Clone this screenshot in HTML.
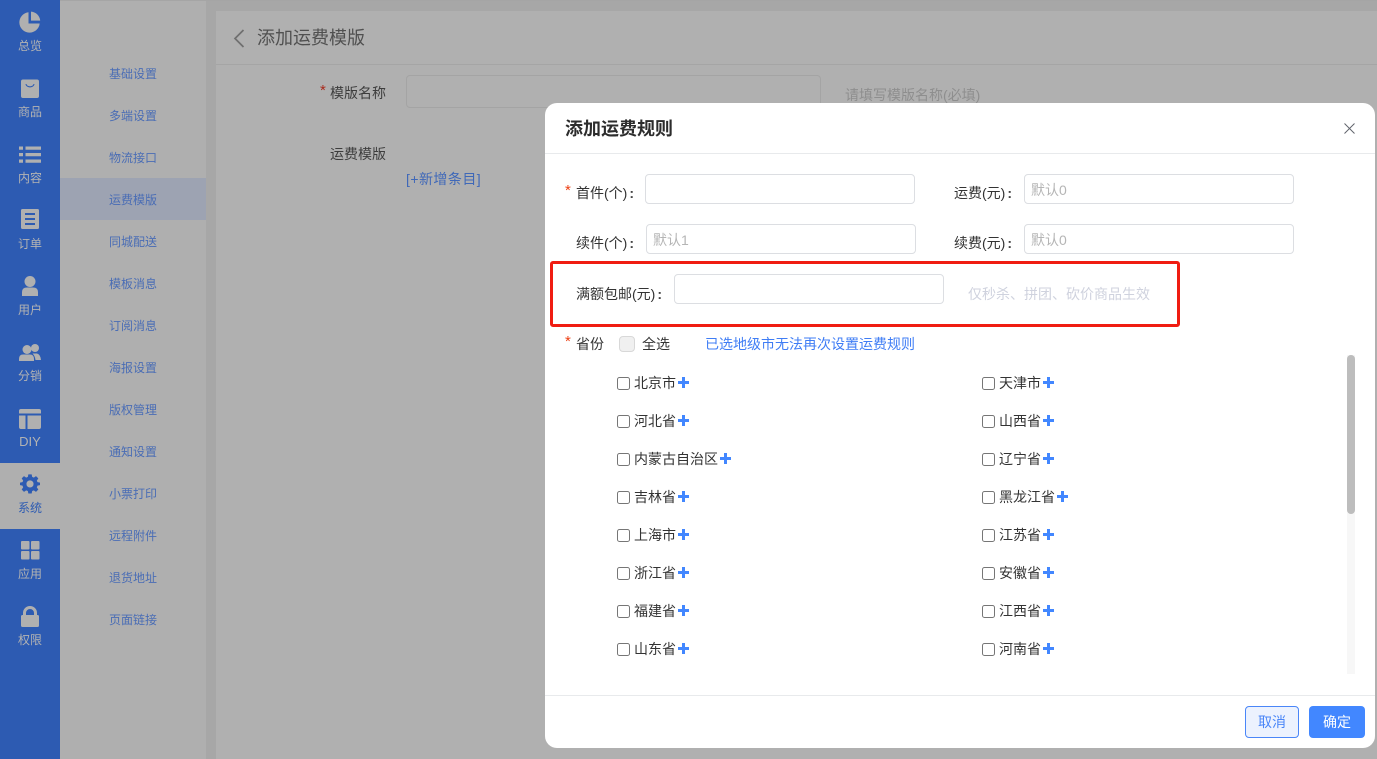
<!DOCTYPE html>
<html lang="zh"><head><meta charset="utf-8"><title>添加运费规则</title>
<style>
*{box-sizing:border-box;margin:0;padding:0}
html,body{width:1377px;height:759px;overflow:hidden;background:#a7a7a7;font-family:"Liberation Sans","Noto Sans CJK SC",sans-serif}
.a{position:absolute;white-space:nowrap}
#side{position:absolute;left:0;top:0;width:60px;height:759px;background:#2d5bb2}
.n{position:absolute;left:0;width:60px;height:66px;color:#b3b3b3;font-size:12px;text-align:center}
.n svg{position:absolute;left:18px;top:10px;width:24px;height:24px;fill:#b0b0b0}
.n span{position:absolute;left:0;right:0;top:36px;line-height:18px}
.n.on{background:#afafaf;color:#2d5bb2}.n.on svg{fill:#2d5bb2}
#sub{position:absolute;left:60px;top:1px;width:146px;height:758px;background:#afafaf}
#sub div{position:absolute;left:0;width:146px;height:42px;line-height:42px;padding-left:49px;font-size:12px;color:#4a6db5}
#sub .on{background:#9da3b2}
#main{position:absolute;left:216px;top:11px;width:1161px;height:748px;background:#b0b0b0}
#dlg{position:absolute;left:545px;top:103px;width:830px;height:645px;background:#fff;border-radius:12px;overflow:hidden}
.t{font-size:14px;color:#333;line-height:20px}
.t u{text-decoration:none;font-weight:700;margin-left:2px;color:#444}
.i{position:absolute;width:270px;height:30px;border:1px solid #dcdee2;border-radius:4px;background:#fff;font-size:14px;color:#b5b5b5;line-height:30px;padding-left:6px}
.s{color:#ed4014;font-size:15px;font-family:"Liberation Sans",sans-serif}
.c{position:absolute;width:13px;height:13px;border:1px solid #767676;border-radius:2.5px;background:#fff}
.p{position:absolute;font-size:14px;line-height:20px;color:#333;white-space:nowrap}
.p b{display:inline-block;position:relative;width:11px;height:12px;margin-left:2px;vertical-align:0}
.p b:before{content:"";position:absolute;left:0;top:5px;width:11px;height:3px;background:#4287ff}
.p b:after{content:"";position:absolute;left:4px;top:1px;width:3px;height:11px;background:#4287ff}
</style></head><body>
<div class="a" style="left:0;top:0;width:1377px;height:1px;background:#a5a5a5"></div>
<div id="side">
<div class="n" style="top:1px"><svg viewBox="0 0 24 24" style="top:9px"><path d="M10.500 2.300A10.200 10.200 0 1 0 21.700 13.500H10.500Z"/><path d="M13 1.600V10.600H22.200A9.900 9.900 0 0 0 13 1.600Z"/></svg><span>总览</span></div>
<div class="n" style="top:67px"><svg viewBox="0 0 24 24"><path fill-rule="evenodd" d="M5 2.500H19Q21 2.500 21 4.500V19Q21 21 19 21H5Q3 21 3 19V4.500Q3 2.500 5 2.500ZM7.500 7C8 11.500 16 11.500 16.500 7L15.500 7C15 10 9 10 8.500 7Z"/></svg><span>商品</span></div>
<div class="n" style="top:133px"><svg viewBox="0 0 24 24"><path d="M1 3.500h4v3.200H1zM7.500 3.500h15.500v3.200H7.500zM1 10h4v3.200H1zM7.500 10h15.500v3.200H7.500zM1 16.500h4v3.200H1zM7.500 16.500h15.500v3.200H7.500z"/></svg><span>内容</span></div>
<div class="n" style="top:199px"><svg viewBox="0 0 24 24"><path fill-rule="evenodd" d="M4.500 0H19.500Q21 0 21 1.500V18.500Q21 20 19.500 20H4.500Q3 20 3 18.500V1.500Q3 0 4.500 0ZM7 4V6H17V4ZM7 9V11H17V9ZM7 14V16H17V14Z"/></svg><span>订单</span></div>
<div class="n" style="top:265px"><svg viewBox="0 0 24 24"><circle cx="12" cy="6.500" r="5.500"/><path d="M4 21V17Q4 12.500 9 12.500H15Q20 12.500 20 17V21Z"/></svg><span>用户</span></div>
<div class="n" style="top:331px"><svg viewBox="0 0 24 24"><circle cx="9" cy="8.500" r="4.500"/><path d="M1 20V18Q1 13.500 5 13.500H12Q16 13.500 16 18V20Z"/><circle cx="17" cy="7" r="4"/><path d="M14.500 12.500H19Q22.500 13.500 23 19H17.500Q17 15 14.500 12.500Z"/></svg><span>分销</span></div>
<div class="n" style="top:397px"><svg viewBox="0 0 24 24"><path d="M3 2H21Q23 2 23 4V6.500H1V4Q1 2 3 2ZM1 8.500H7.500V22H3Q1 22 1 20ZM9.500 8.500H23V20Q23 22 21 22H9.500Z"/></svg><span style="font-size:13px">DIY</span></div>
<div class="n on" style="top:463px"><svg viewBox="0 0 24 24" style="left:20px;top:10px;width:20px;height:21px"><path fill-rule="evenodd" d="M10 1H14L14.600 4.100 16.600 4.900 19.200 3.100 22 5.900 20.200 8.500 21 10.400 24 11V14L21 14.600 20.200 16.600 22 19.200 19.200 22 16.600 20.200 14.600 21 14 24H10L9.400 21 7.400 20.200 4.800 22 2 19.200 3.800 16.600 3 14.600 0 14V11L3 10.400 3.800 8.500 2 5.900 4.800 3.100 7.400 4.900 9.400 4.100ZM12 8.200A4.300 4.300 0 1 0 12 16.800 4.300 4.300 0 1 0 12 8.200Z"/></svg><span>系统</span></div>
<div class="n" style="top:529px"><svg viewBox="0 0 24 24"><rect x="3" y="2" width="8.500" height="8.500" rx="1"/><rect x="13" y="2" width="8.500" height="8.500" rx="1"/><rect x="3" y="12" width="8.500" height="8.500" rx="1"/><rect x="13" y="12" width="8.500" height="8.500" rx="1"/></svg><span>应用</span></div>
<div class="n" style="top:595px"><svg viewBox="0 0 24 24"><path fill-rule="evenodd" d="M5 10V8A7 7 0 0 1 19 8V10H19.500Q21 10 21 11.500V20.500Q21 22 19.500 22H4.500Q3 22 3 20.500V11.500Q3 10 4.500 10ZM8 10H16V8A4 4 0 0 0 8 8Z"/></svg><span>权限</span></div>
</div>
<div id="sub">
<div style="top:52px">基础设置</div><div style="top:94px">多端设置</div><div style="top:136px">物流接口</div><div class="on" style="top:177px;line-height:44px">运费模版</div><div style="top:219px;line-height:44px">同城配送</div><div style="top:262px">模板消息</div><div style="top:304px">订阅消息</div><div style="top:346px">海报设置</div><div style="top:388px">版权管理</div><div style="top:430px">通知设置</div><div style="top:472px">小票打印</div><div style="top:514px">远程附件</div><div style="top:556px">退货地址</div><div style="top:598px">页面链接</div>
</div>
<div id="main"></div>
<div class="a" style="left:216px;top:64px;width:1161px;height:1px;background:#a5a5a5"></div>
<svg class="a" style="left:232px;top:28px" width="14" height="20" viewBox="0 0 14 20"><path d="M11.500 2L3 10.500 11.500 19" fill="none" stroke="#6f6f6f" stroke-width="1.700"/></svg>
<div class="a" style="left:257px;top:24px;font-size:18px;line-height:28px;color:#505050">添加运费模版</div>
<div class="a" style="left:320px;top:81px;font-size:15px;line-height:20px;color:#a92a1c">*</div>
<div class="a" style="left:330px;top:83px;font-size:14px;line-height:20px;color:#3d3d3d">模版名称</div>
<div class="a" style="left:406px;top:75px;width:415px;height:33px;border:1px solid #a4a4a4;border-radius:4px"></div>
<div class="a" style="left:845px;top:85px;font-size:14px;line-height:20px;color:#8e8e8e">请填写模版名称(必填)</div>
<div class="a" style="left:330px;top:144px;font-size:14px;line-height:20px;color:#3d3d3d">运费模版</div>
<div class="a" style="left:406px;top:169px;font-size:14px;line-height:20px;color:#3f68b8;letter-spacing:.45px">[+新增条目]</div>

<div id="dlg">
<div class="a" style="left:20px;top:13px;font-size:18px;font-weight:700;line-height:26px;color:#2c2c2c">添加运费规则</div>
<svg class="a" style="left:798px;top:19px" width="13" height="13" viewBox="0 0 13 13"><path d="M1.500 1.500L11.500 11.500M11.500 1.500L1.500 11.500" stroke="#60646c" stroke-width="1" fill="none"/></svg>
<div class="a" style="left:0;top:50px;width:830px;height:1px;background:#e8eaec"></div>

<div class="a s" style="left:20px;top:78px;line-height:20px">*</div>
<div class="a t" style="left:31px;top:80px">首件(个)<u>:</u></div>
<div class="i" style="left:100px;top:71px"></div>
<div class="a t" style="left:409px;top:80px">运费(元)<u>:</u></div>
<div class="i" style="left:479px;top:71px">默认0</div>
<div class="a t" style="left:31px;top:130px">续件(个)<u>:</u></div>
<div class="i" style="left:101px;top:121px">默认1</div>
<div class="a t" style="left:409px;top:130px">续费(元)<u>:</u></div>
<div class="i" style="left:479px;top:121px">默认0</div>
<div class="a t" style="left:31px;top:181px">满额包邮(元)<u>:</u></div>
<div class="i" style="left:129px;top:171px"></div>
<div class="a" style="left:423px;top:181px;font-size:14px;line-height:20px;color:#cfd2de">仅秒杀、拼团、砍价商品生效</div>
<div class="a" style="left:5px;top:158px;width:630px;height:66px;border:3px solid #f01c12;border-radius:3px"></div>

<div class="a s" style="left:20px;top:229px;line-height:20px">*</div>
<div class="a t" style="left:31px;top:231px">省份</div>
<div class="a" style="left:74px;top:233px;width:16px;height:16px;border:1px solid #d8d8d8;border-radius:4px;background:#f0f0f0"></div>
<div class="a t" style="left:97px;top:231px">全选</div>
<div class="a" style="left:160px;top:231px;font-size:14px;line-height:20px;color:#3f7df5">已选地级市无法再次设置运费规则</div>

<i class="c" style="left:72px;top:274px"></i><div class="p" style="left:89px;top:270px">北京市<b></b></div>
<i class="c" style="left:437px;top:274px"></i><div class="p" style="left:454px;top:270px">天津市<b></b></div>
<i class="c" style="left:72px;top:312px"></i><div class="p" style="left:89px;top:308px">河北省<b></b></div>
<i class="c" style="left:437px;top:312px"></i><div class="p" style="left:454px;top:308px">山西省<b></b></div>
<i class="c" style="left:72px;top:350px"></i><div class="p" style="left:89px;top:346px">内蒙古自治区<b></b></div>
<i class="c" style="left:437px;top:350px"></i><div class="p" style="left:454px;top:346px">辽宁省<b></b></div>
<i class="c" style="left:72px;top:388px"></i><div class="p" style="left:89px;top:384px">吉林省<b></b></div>
<i class="c" style="left:437px;top:388px"></i><div class="p" style="left:454px;top:384px">黑龙江省<b></b></div>
<i class="c" style="left:72px;top:426px"></i><div class="p" style="left:89px;top:422px">上海市<b></b></div>
<i class="c" style="left:437px;top:426px"></i><div class="p" style="left:454px;top:422px">江苏省<b></b></div>
<i class="c" style="left:72px;top:464px"></i><div class="p" style="left:89px;top:460px">浙江省<b></b></div>
<i class="c" style="left:437px;top:464px"></i><div class="p" style="left:454px;top:460px">安徽省<b></b></div>
<i class="c" style="left:72px;top:502px"></i><div class="p" style="left:89px;top:498px">福建省<b></b></div>
<i class="c" style="left:437px;top:502px"></i><div class="p" style="left:454px;top:498px">江西省<b></b></div>
<i class="c" style="left:72px;top:540px"></i><div class="p" style="left:89px;top:536px">山东省<b></b></div>
<i class="c" style="left:437px;top:540px"></i><div class="p" style="left:454px;top:536px">河南省<b></b></div>

<div class="a" style="left:802px;top:252px;width:8px;height:319px;background:#f7f7f7"></div>
<div class="a" style="left:802px;top:252px;width:8px;height:159px;background:#bdbdbd;border-radius:4px"></div>
<div class="a" style="left:0;top:592px;width:830px;height:1px;background:#e8eaec"></div>
<div class="a" style="left:700px;top:603px;width:54px;height:32px;border:1px solid #4a86f8;border-radius:4px;background:#ecf2fe;color:#4a86f8;font-size:14px;line-height:30px;text-align:center">取消</div>
<div class="a" style="left:764px;top:603px;width:56px;height:32px;border-radius:4px;background:#4287ff;color:#fff;font-size:14px;line-height:32px;text-align:center">确定</div>
</div>
</body></html>
